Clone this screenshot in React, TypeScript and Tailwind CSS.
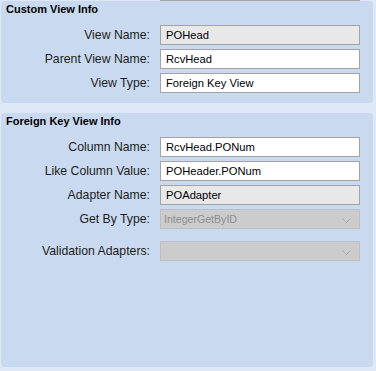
import React from 'react';

interface FieldProps {
  label: string;
  value: string;
  kind?: 'text' | 'readonly' | 'select';
  className?: string;
}

const Chevron: React.FC = () => (
  <svg width="9" height="5" viewBox="0 0 9 5" className="absolute right-[8px] top-[8px]">
    <path d="M0.5 0.5 L4.5 4.5 L8.5 0.5" fill="none" stroke="#a8a8a8" strokeWidth="1" />
  </svg>
);

const Field: React.FC<FieldProps> = ({ label, value, kind = 'text', className = '' }) => {
  const box =
    kind === 'select'
      ? 'relative bg-[#cccccc] border-[#bebebe] text-[#8c8c8c] pl-[3px] text-[10.6px]'
      : kind === 'readonly'
        ? 'bg-[#e8e8e8] border-[#a3a3a3] text-black pl-[5px] text-[11.2px]'
        : 'bg-white border-[#a3a3a3] text-black pl-[5px] text-[11.2px]';

  return (
    <div className={`flex items-center gap-[10px] ${className}`}>
      <div className="w-[149px] text-right text-[12.25px] leading-[14px] text-[#1c1c1c]">{label}</div>
      <div className={`w-[200px] h-[20px] border flex items-center leading-[14px] ${box}`}>
        {value}
        {kind === 'select' && <Chevron />}
      </div>
    </div>
  );
};

const Panel: React.FC<{ title: string; className?: string; children: React.ReactNode }> = ({
  title,
  className = '',
  children,
}) => (
  <div className={`ml-px mr-[3px] bg-[#c9daf0] rounded-[4px] pt-[2px] ${className}`}>
    <div className="pl-[5px] text-[11px] leading-[13px] font-bold text-black">{title}</div>
    <div className="mt-[9px] flex flex-col gap-[4px]">{children}</div>
  </div>
);

export default function App() {
  return (
    <div
      className="w-[376px] h-[371px] overflow-hidden bg-[#dde7f5]"
      style={{ fontFamily: '"Liberation Sans", Arial, sans-serif' }}
    >
      <div className="h-px ml-[160px] w-[200px] bg-[#a3a3a3]" />
      <Panel title="Custom View Info" className="h-[102px]">
        <Field label="View Name:" value="POHead" kind="readonly" />
        <Field label="Parent View Name:" value="RcvHead" />
        <Field label="View Type:" value="Foreign Key View" />
      </Panel>
      <Panel title="Foreign Key View Info" className="mt-[10px] h-[254px]">
        <Field label="Column Name:" value="RcvHead.PONum" />
        <Field label="Like Column Value:" value="POHeader.PONum" />
        <Field label="Adapter Name:" value="POAdapter" kind="readonly" />
        <Field label="Get By Type:" value="IntegerGetByID" kind="select" />
        <Field label="Validation Adapters:" value="" kind="select" className="mt-[8px]" />
      </Panel>
    </div>
  );
}
